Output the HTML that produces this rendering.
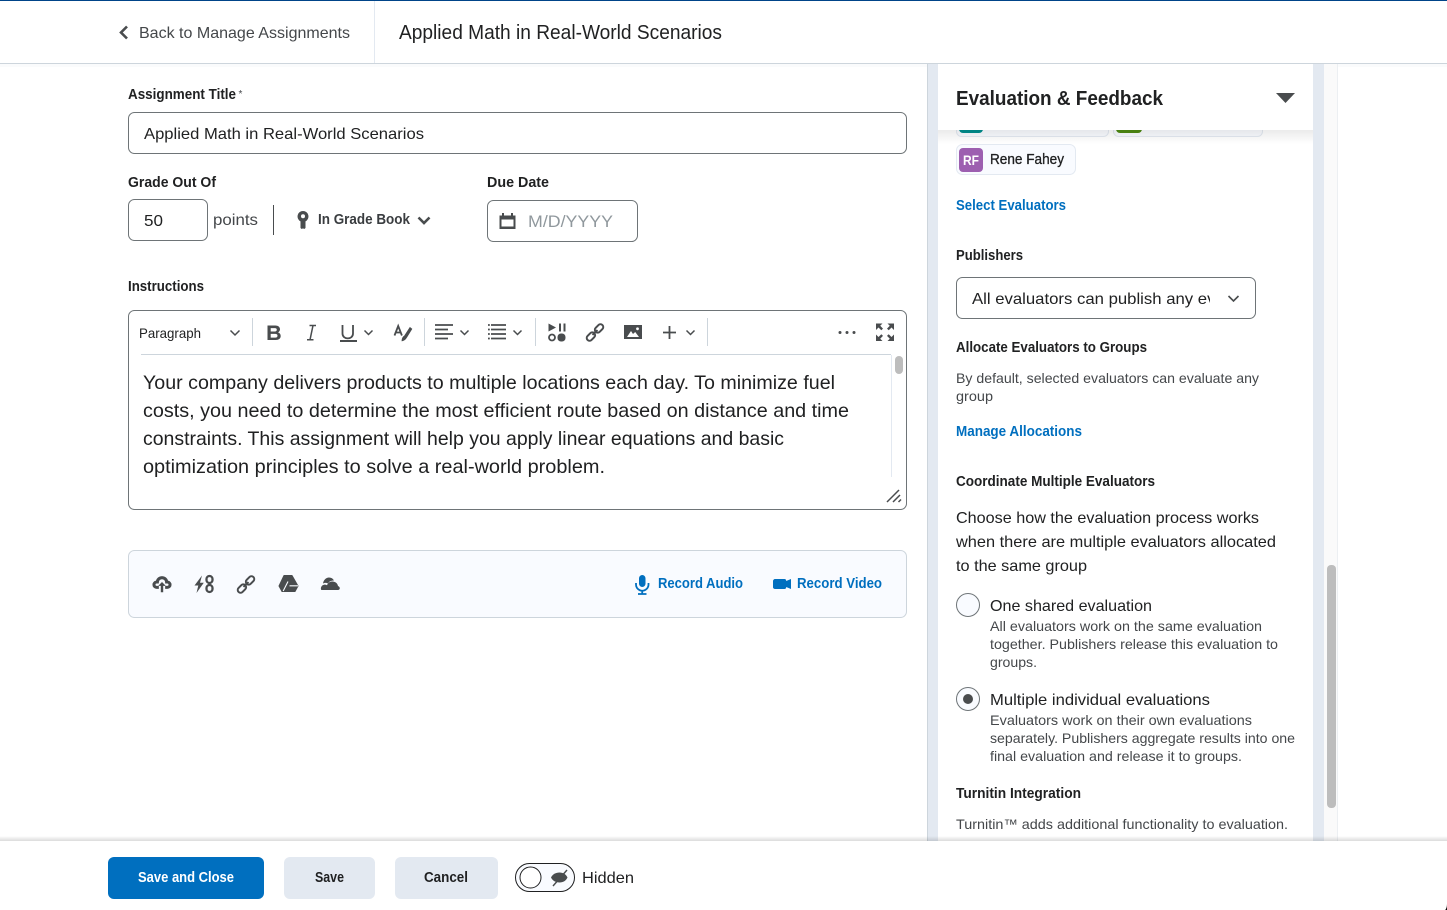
<!DOCTYPE html>
<html><head><meta charset="utf-8"><title>Applied Math in Real-World Scenarios</title>
<style>
html,body{margin:0;padding:0;background:#fff;width:1447px;height:910px;overflow:hidden}
svg{display:block}
text{font-family:"Liberation Sans",Arial,sans-serif;fill:#202122;white-space:pre}
.b{font-weight:700}
.g{fill:#44474a}
.l{fill:#006fbf;font-weight:700}
.s{font-size:14px}
.b.s,.l.s{font-size:14.5px}
.i{fill:#494c4e}
.st{fill:none;stroke:#494c4e}
</style></head><body>
<svg width="1447" height="910" viewBox="0 0 1447 910" xmlns="http://www.w3.org/2000/svg">
<defs>
<clipPath id="sel"><rect x="960" y="280" width="250" height="36"/></clipPath>
<clipPath id="body"><rect x="929" y="67" width="410" height="774"/></clipPath>
<linearGradient id="fs" x1="0" y1="0" x2="0" y2="1"><stop offset="0" stop-color="#000" stop-opacity="0"/><stop offset="1" stop-color="#000" stop-opacity=".14"/></linearGradient>
<linearGradient id="hs" x1="0" y1="0" x2="0" y2="1"><stop offset="0" stop-color="#000" stop-opacity=".08"/><stop offset="1" stop-color="#000" stop-opacity="0"/></linearGradient>
</defs>

<!-- top bar -->
<rect x="0" y="0" width="1447" height="1" fill="#004489"/>
<rect x="0" y="63" width="1447" height="1" fill="#cdd5dc"/>
<rect x="0" y="64" width="1447" height="3" fill="#fafbfc"/>
<rect x="374" y="1" width="1" height="62" fill="#e3e9f1"/>
<path d="M127 26.500L121 32.500L127 38.500" fill="none" stroke="#494c4e" stroke-width="2.600"/>
<text x="139" y="38" font-size="16" textLength="211" lengthAdjust="spacingAndGlyphs" class="g">Back to Manage Assignments</text>
<text x="399" y="39" font-size="20" textLength="323" lengthAdjust="spacingAndGlyphs">Applied Math in Real-World Scenarios</text>

<!-- form -->
<text x="128" y="99" class="b s" textLength="108" lengthAdjust="spacingAndGlyphs">Assignment Title</text>
<text x="238.500" y="97" font-size="10" class="g">*</text>
<rect x="128.500" y="112.500" width="778" height="41" rx="6" fill="#fff" stroke="#6e7477"/>
<text x="144" y="139" font-size="16" textLength="280" lengthAdjust="spacingAndGlyphs">Applied Math in Real-World Scenarios</text>

<text x="128" y="187" class="b s" textLength="88" lengthAdjust="spacingAndGlyphs">Grade Out Of</text>
<text x="487" y="187" class="b s" textLength="62" lengthAdjust="spacingAndGlyphs">Due Date</text>
<rect x="128.500" y="199.500" width="79" height="41" rx="6" fill="#fff" stroke="#6e7477"/>
<text x="144" y="226" font-size="16" textLength="19" lengthAdjust="spacingAndGlyphs">50</text>
<text x="213" y="225" font-size="16" textLength="45" lengthAdjust="spacingAndGlyphs" class="g">points</text>
<rect x="273" y="205" width="1" height="30" fill="#494c4e"/>
<path d="M303 211a5.500 5.500 0 0 1 2.500 10.400V228l-1.200 1-1.300-.6-1.300.6-1.200-1v-6.600a5.500 5.500 0 0 1 2.500-10.400zm0 3.200a2 2 0 1 0 0 4 2 2 0 0 0 0-4z" class="i" fill-rule="evenodd"/>
<text x="318" y="224" class="b s" textLength="92" lengthAdjust="spacingAndGlyphs" style="fill:#3a3d40">In Grade Book</text>
<path d="M418.500 217.500L424 223L429.500 217.500" fill="none" stroke="#494c4e" stroke-width="2.600"/>
<rect x="487.500" y="200.500" width="150" height="41" rx="6" fill="#fff" stroke="#6e7477"/>
<path d="M502 213h2v2.500h7V213h2v2.500h2.500V229h-16V215.500H502zm-.5 6.500v7h12v-7z" class="i" fill-rule="evenodd"/>
<text x="528" y="227" font-size="16.500" textLength="85" lengthAdjust="spacingAndGlyphs" style="fill:#90989d">M/D/YYYY</text>

<text x="128" y="291" class="b s" textLength="76" lengthAdjust="spacingAndGlyphs">Instructions</text>

<!-- editor -->
<rect x="128.500" y="310.500" width="778" height="199" rx="6" fill="#fff" stroke="#6e7477"/>
<text x="139" y="338" class="s" textLength="62" lengthAdjust="spacingAndGlyphs">Paragraph</text>
<path d="M230.500 330.500L235 335L239.500 330.500" class="st" stroke-width="1.500"/>
<rect x="252" y="318" width="1" height="28" fill="#cdd5dc"/>
<rect x="424" y="318" width="1" height="28" fill="#cdd5dc"/>
<rect x="535" y="318" width="1" height="28" fill="#cdd5dc"/>
<rect x="707" y="318" width="1" height="28" fill="#cdd5dc"/>
<rect x="141" y="354" width="750" height="1" fill="#cdd5dc"/>
<rect x="891" y="355" width="1" height="122" fill="#e3e9f1"/>
<rect x="895" y="356" width="8" height="18" rx="4" fill="#bdbdbd"/>
<!-- B -->
<path d="M267.500 325.500h7.800c2.900 0 4.700 1.500 4.700 3.800 0 1.500-.8 2.600-2 3.100 1.600.5 2.700 1.800 2.700 3.600 0 2.600-2 4-4.900 4h-8.300zm3.200 2.600v3.400h4.200c1.200 0 1.900-.6 1.900-1.700 0-1.100-.7-1.700-1.900-1.700zm0 5.800v3.700h4.600c1.400 0 2.200-.7 2.200-1.900 0-1.200-.8-1.800-2.200-1.800z" class="i" fill-rule="evenodd"/>
<!-- I -->
<path d="M309.500 325.500h6.500M307 339.800h6.500M313 325.500l-3 14.300" class="st" stroke-width="1.500"/>
<!-- U -->
<path d="M342.500 325v8.500c0 6.500 10.500 6.500 10.500 0V325" class="st" stroke-width="1.800"/>
<rect x="340" y="340" width="17" height="2" class="i"/>
<path d="M364.500 330.500L368.500 334.500L372.500 330.500" class="st" stroke-width="1.500"/>
<!-- A/ -->
<path d="M394.500 335.500l3.700-9.500 3.700 9.500M395.800 332.500h4.800" class="st" stroke-width="1.800"/>
<path d="M410 327.500L411.800 329L406.500 337.500C405.500 339.500 404 340.500 402 340.800C402 338.500 402.800 337 404.500 336z" class="i" stroke="#494c4e" stroke-width=".8"/>
<!-- align -->
<path d="M435 325h18M435 329.500h13M435 334h18M435 338.500h13" class="st" stroke-width="1.800"/>
<path d="M460.500 330.500L464.500 334.500L468.500 330.500" class="st" stroke-width="1.500"/>
<!-- list -->
<path d="M491 325h15M491 329.500h15M491 334h15M491 338.500h15M488 325h1.800M488 329.500h1.800M488 334h1.800M488 338.500h1.800" class="st" stroke-width="1.800"/>
<path d="M513.500 330.500L517.500 334.500L521.500 330.500" class="st" stroke-width="1.500"/>
<!-- media -->
<path d="M548.500 323.500l7.500 4-7.500 4z" class="i"/>
<rect x="559" y="323.500" width="2" height="8" class="i"/><rect x="563.500" y="323.500" width="2" height="8" class="i"/>
<circle cx="552" cy="337.500" r="3" fill="none" stroke="#494c4e" stroke-width="1.800"/>
<rect x="557.500" y="333.500" width="8" height="8" rx="3.500" class="i"/>
<!-- link -->
<g class="st" stroke-width="2" transform="rotate(-45 595 332.500)"><rect x="584.500" y="329.700" width="9.500" height="5.600" rx="2.800"/><rect x="596" y="329.700" width="9.500" height="5.600" rx="2.800"/><path d="M591.500 332.500h7"/></g>
<!-- image -->
<path d="M624 325h18v14h-18zM627 337h12l-3.800-5-2.200 2-2-3z" class="i" fill-rule="evenodd"/>
<circle cx="637.500" cy="328.800" r="1.400" fill="#fff"/>
<!-- plus -->
<path d="M669.500 326v13M663 332.500h13" class="st" stroke-width="1.800"/>
<path d="M686.500 330.500L690.500 334.500L694.500 330.500" class="st" stroke-width="1.500"/>
<circle cx="840" cy="332.500" r="1.500" class="i"/><circle cx="847" cy="332.500" r="1.500" class="i"/><circle cx="854" cy="332.500" r="1.500" class="i"/>
<!-- expand -->
<path d="M876 323.500h6.500l-2.300 2.300 2.800 2.800-1.700 1.700-2.800-2.800-2.500 2.500zM894 323.500h-6.500l2.300 2.300-2.800 2.800 1.700 1.700 2.800-2.800 2.500 2.500zM876 341h6.500l-2.300-2.300 2.800-2.800-1.700-1.700-2.800 2.800-2.500-2.500zM894 341h-6.500l2.300-2.300-2.800-2.800 1.700-1.700 2.800 2.800 2.500-2.500z" class="i"/>

<text x="143" y="389" font-size="19.500" textLength="692" lengthAdjust="spacingAndGlyphs">Your company delivers products to multiple locations each day. To minimize fuel</text>
<text x="143" y="417" font-size="19.500" textLength="706" lengthAdjust="spacingAndGlyphs">costs, you need to determine the most efficient route based on distance and time</text>
<text x="143" y="445" font-size="19.500" textLength="641" lengthAdjust="spacingAndGlyphs">constraints. This assignment will help you apply linear equations and basic</text>
<text x="143" y="473" font-size="19.500" textLength="462" lengthAdjust="spacingAndGlyphs">optimization principles to solve a real-world problem.</text>
<path d="M887 502L899 490M893 502L900 495M898.500 502L901 499.500" stroke="#494c4e" stroke-width="1.500" fill="none"/>

<!-- attachments -->
<rect x="128.500" y="550.500" width="778" height="67" rx="6" fill="#f9fbff" stroke="#cdd5dc"/>
<path d="M162 576.500c3 0 5.200 1.900 5.800 4.500 2 .2 3.400 1.700 3.400 3.700 0 2.200-1.700 3.800-3.900 3.800h-1.800v-2.300h1.800c.9 0 1.600-.7 1.600-1.500 0-.9-.7-1.500-1.600-1.500h-1.800v-.8c0-2-1.500-3.500-3.500-3.500s-3.500 1.500-3.500 3.500v.8h-1.800c-.9 0-1.600.6-1.600 1.500 0 .8.700 1.500 1.600 1.500h1.800v2.300h-1.800c-2.200 0-3.900-1.600-3.900-3.800 0-2 1.400-3.500 3.400-3.700.6-2.600 2.800-4.500 5.800-4.500z" class="i" stroke="#494c4e" stroke-width=".7"/>
<path d="M162 582l3.800 3.900h-2.600v6.300h-2.400v-6.300h-2.600z" class="i"/>
<path d="M202 575.500l-7.500 10h3.800l-1.800 7.500 7.300-10.300h-3.800z" class="i"/>
<rect x="206.500" y="576" width="6" height="7" rx="3" fill="none" stroke="#494c4e" stroke-width="2.300"/>
<rect x="206.500" y="585" width="6" height="7" rx="3" fill="none" stroke="#494c4e" stroke-width="2.300"/>
<path d="M209.500 582v4" stroke="#494c4e" stroke-width="2.300"/>
<g class="st" stroke-width="2" transform="rotate(-45 246 584.500)"><rect x="235.500" y="581.700" width="9.500" height="5.600" rx="2.800"/><rect x="247" y="581.700" width="9.500" height="5.600" rx="2.800"/><path d="M242.500 584.500h7"/></g>
<!-- drive -->
<path d="M284 575.500h8l6 10.500-3 5.500H282l-3-5.500z" class="i" stroke="#494c4e" stroke-linejoin="round"/>
<path d="M289.500 585.800H298M288 581.500l-4.800 9.500" fill="none" stroke="#f9fbff" stroke-width="1.100"/>
<!-- onedrive -->
<path d="M323 583.500c.5-3.500 3-6 6-6 2.300 0 4 1 5 3-3 0-5 1-6 3-1.500-1-3.500-.8-5 0z" class="i"/>
<path d="M321 589.500c-.5-2.500 1-4.500 3-4.800 1-.2 2-0 3 .5 1-2.500 3-3.700 5.500-3.700 2.800 0 5 1.800 5.500 4.500 1 .3 1.800 1.300 1.800 2.300 0 1.200-.8 1.700-1.800 1.700H322.500c-.8 0-1.300 0-1.500-.5z" class="i"/>
<!-- mic -->
<rect x="639" y="575" width="6.500" height="12" rx="3.250" fill="#006fbf"/>
<path d="M636 583v1.500a6.200 6.200 0 0 0 12.500 0V583M642.200 591v2.500M638 594h8.500" fill="none" stroke="#006fbf" stroke-width="1.800"/>
<text x="658" y="588" class="l s" textLength="85" lengthAdjust="spacingAndGlyphs">Record Audio</text>
<path d="M775 579h9.500c1 0 1.700.7 1.700 1.700v.3l4.800-2v10l-4.800-2v.3c0 1-.7 1.700-1.700 1.700H775c-1 0-2-.7-2-1.700v-6.300c0-1 1-2 2-2z" fill="#006fbf"/>
<text x="797" y="588" class="l s" textLength="85" lengthAdjust="spacingAndGlyphs">Record Video</text>

<!-- right panel -->
<rect x="927" y="64" width="1" height="777" fill="#cdd5dc"/>
<rect x="928" y="64" width="10" height="777" fill="#e3e9f1"/>
<rect x="1313" y="64" width="11" height="777" fill="#e3e9f1"/>
<rect x="1324" y="64" width="13" height="777" fill="#fafafa"/>
<rect x="1337" y="64" width="1" height="777" fill="#eceff2"/>
<rect x="1327" y="565" width="9" height="243" rx="4" fill="#bdbdbd"/>

<g clip-path="url(#body)">
<rect x="956.500" y="110.500" width="152" height="26" rx="5" fill="#f9fbff" stroke="#e3e9f1"/>
<rect x="1113.500" y="110.500" width="149" height="26" rx="5" fill="#f9fbff" stroke="#e3e9f1"/>
<rect x="959" y="110" width="24" height="23" rx="4" fill="#008e8e"/>
<rect x="1116" y="110" width="26" height="23" rx="4" fill="#4e8a12"/>
</g>
<rect x="956.500" y="144.500" width="119" height="30" rx="6" fill="#f9fbff" stroke="#e3e9f1"/>
<rect x="959" y="148" width="24" height="24" rx="4" fill="#9d5fb0"/>
<text x="963" y="165" class="b" font-size="14" textLength="16" lengthAdjust="spacingAndGlyphs" style="fill:#fff">RF</text>
<text x="990" y="164" font-size="14.500" textLength="74" lengthAdjust="spacingAndGlyphs" style="stroke:#202122;stroke-width:.3">Rene Fahey</text>

<!-- sticky header -->
<rect x="938" y="130" width="375" height="14" fill="url(#hs)"/>
<path d="M938 64h375v60a6 6 0 0 1-6 6H944a6 6 0 0 1-6-6z" fill="#fff"/>
<text x="956" y="105" class="b" font-size="20.500" textLength="207" lengthAdjust="spacingAndGlyphs">Evaluation &amp; Feedback</text>
<path d="M1276 93h19l-9.500 10z" fill="#494c4e"/>

<text x="956" y="210" class="l s" textLength="110" lengthAdjust="spacingAndGlyphs">Select Evaluators</text>
<text x="956" y="260" class="b s" textLength="67" lengthAdjust="spacingAndGlyphs">Publishers</text>
<rect x="956.500" y="277.500" width="299" height="41" rx="6" fill="#fff" stroke="#6e7477"/>
<g clip-path="url(#sel)"><text x="972" y="304" font-size="16" textLength="302" lengthAdjust="spacingAndGlyphs">All evaluators can publish any evaluation</text></g>
<path d="M1228.500 296L1233.500 301L1238.500 296" class="st" stroke-width="1.600"/>

<text x="956" y="352" class="b s" textLength="191" lengthAdjust="spacingAndGlyphs">Allocate Evaluators to Groups</text>
<text x="956" y="383" class="s g" textLength="303" lengthAdjust="spacingAndGlyphs">By default, selected evaluators can evaluate any</text>
<text x="956" y="401" class="s g" textLength="37" lengthAdjust="spacingAndGlyphs">group</text>
<text x="956" y="436" class="l s" textLength="126" lengthAdjust="spacingAndGlyphs">Manage Allocations</text>
<text x="956" y="486" class="b s" textLength="199" lengthAdjust="spacingAndGlyphs">Coordinate Multiple Evaluators</text>
<text x="956" y="523" font-size="16" textLength="303" lengthAdjust="spacingAndGlyphs">Choose how the evaluation process works</text>
<text x="956" y="547" font-size="16" textLength="320" lengthAdjust="spacingAndGlyphs">when there are multiple evaluators allocated</text>
<text x="956" y="571" font-size="16" textLength="131" lengthAdjust="spacingAndGlyphs">to the same group</text>

<circle cx="968" cy="605" r="11.500" fill="#f9fbff" stroke="#6e7477"/>
<text x="990" y="611" font-size="16" textLength="162" lengthAdjust="spacingAndGlyphs">One shared evaluation</text>
<text x="990" y="631" class="s g" textLength="272" lengthAdjust="spacingAndGlyphs">All evaluators work on the same evaluation</text>
<text x="990" y="649" class="s g" textLength="288" lengthAdjust="spacingAndGlyphs">together. Publishers release this evaluation to</text>
<text x="990" y="667" class="s g" textLength="47" lengthAdjust="spacingAndGlyphs">groups.</text>

<circle cx="968" cy="699" r="11.500" fill="#f9fbff" stroke="#6e7477"/>
<circle cx="968" cy="699" r="5" fill="#494c4e"/>
<text x="990" y="705" font-size="16" textLength="220" lengthAdjust="spacingAndGlyphs">Multiple individual evaluations</text>
<text x="990" y="725" class="s g" textLength="262" lengthAdjust="spacingAndGlyphs">Evaluators work on their own evaluations</text>
<text x="990" y="743" class="s g" textLength="305" lengthAdjust="spacingAndGlyphs">separately. Publishers aggregate results into one</text>
<text x="990" y="761" class="s g" textLength="252" lengthAdjust="spacingAndGlyphs">final evaluation and release it to groups.</text>

<text x="956" y="798" class="b s" textLength="125" lengthAdjust="spacingAndGlyphs">Turnitin Integration</text>
<text x="956" y="829" class="s g" textLength="332" lengthAdjust="spacingAndGlyphs">Turnitin™ adds additional functionality to evaluation.</text>

<!-- footer -->
<rect x="0" y="836" width="1447" height="5" fill="url(#fs)"/>
<rect x="0" y="841" width="1447" height="69" fill="#fff"/>
<rect x="108" y="857" width="156" height="42" rx="6" fill="#006fbf"/>
<text x="138" y="882" class="b s" textLength="96" lengthAdjust="spacingAndGlyphs" style="fill:#fff">Save and Close</text>
<rect x="284" y="857" width="91" height="42" rx="6" fill="#e3e9f1"/>
<text x="315" y="882" class="b s" textLength="29" lengthAdjust="spacingAndGlyphs">Save</text>
<rect x="395" y="857" width="103" height="42" rx="6" fill="#e3e9f1"/>
<text x="424" y="882" class="b s" textLength="44" lengthAdjust="spacingAndGlyphs">Cancel</text>
<rect x="515.500" y="863.500" width="59" height="28" rx="14" fill="#f9fbff" stroke="#202122"/>
<circle cx="530.500" cy="877.500" r="10.500" fill="#fff" stroke="#202122"/>
<path d="M551 877.500c1.500-3.300 4.800-5 8.500-5s6.500 1.700 8 5c-1.500 3.300-4.300 5-8 5s-7-1.700-8.500-5z" fill="#494c4e"/>
<path d="M553 886L567 870" stroke="#494c4e" stroke-width="1.400"/>
<text x="582" y="883" font-size="16" textLength="52" lengthAdjust="spacingAndGlyphs">Hidden</text>
<path d="M1447 904c0 3-.8 5-1.800 6h1.800z" fill="#000"/>
</svg>
</body></html>
